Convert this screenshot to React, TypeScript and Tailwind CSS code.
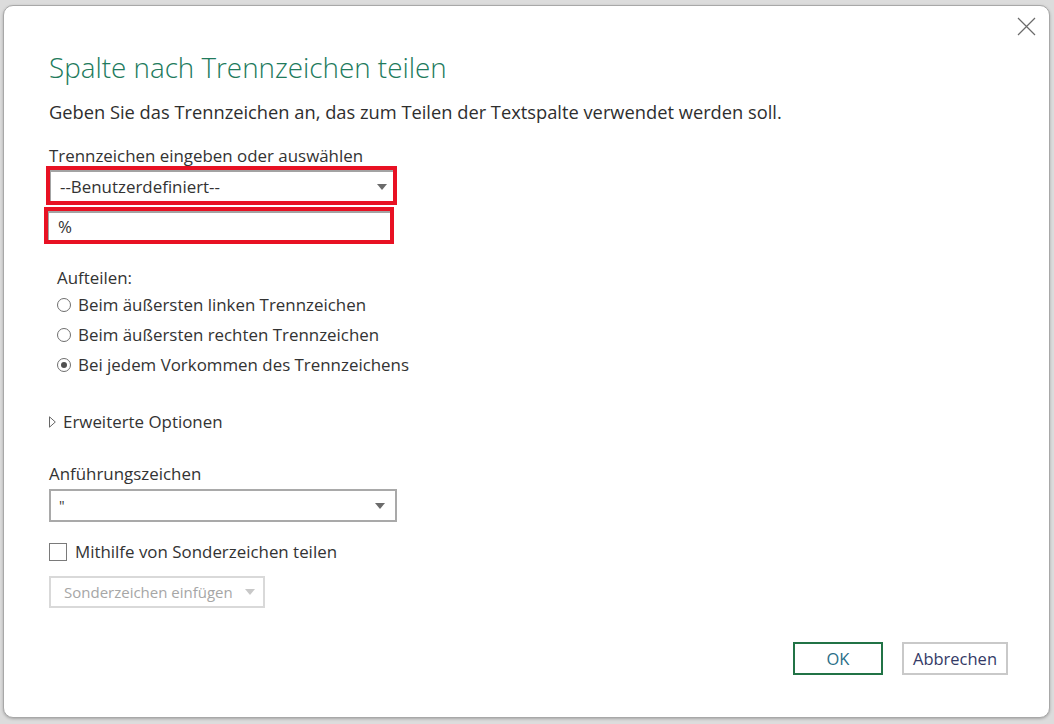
import React from "react";

const font = { fontFamily: '"Open Sans", "Noto Sans", sans-serif' };

const Caret = ({ color = "#6b6b6b" }: { color?: string }) => (
  <svg width="10" height="6" viewBox="0 0 10 6">
    <path d="M0 0 H10 L5 6 Z" fill={color} />
  </svg>
);

const Radio = ({ checked, label }: { checked?: boolean; label: string }) => (
  <div className="flex items-center gap-[7px] h-[30px]">
    <span className="w-[14px] h-[14px] rounded-full border border-[#6e6e6e] flex items-center justify-center bg-white">
      {checked && <span className="w-[6px] h-[6px] rounded-full bg-[#505050]" />}
    </span>
    <span>{label}</span>
  </div>
);

const App: React.FC = () => {
  return (
    <div
      className="w-[1054px] h-[724px] bg-[#dcdcdc] pt-[5px] pl-[3px] pr-[4px] pb-[6px] overflow-hidden"
      style={font}
    >
      <div className="h-full bg-white border border-[#a8a8a8] rounded-[10px] shadow-[0_1px_3px_rgba(0,0,0,0.25)] flex flex-col text-[#333333] text-[16.9px] leading-[22px]">
        {/* header */}
        <div className="flex justify-end pt-[11px] pr-[13px]">
          <svg width="19" height="19" viewBox="0 0 19 19">
            <path d="M1 1 L18 18 M18 1 L1 18" stroke="#6a6a6a" strokeWidth="1.2" fill="none" />
          </svg>
        </div>

        <div className="pl-[45px] flex flex-col flex-1">
          <h1 className="text-[27.8px] font-light text-[#217a5c] leading-[36px] mt-[13px]">
            Spalte nach Trennzeichen teilen
          </h1>
          <p className="text-[18.3px] leading-[24px] mt-[15px] text-[#2e2e2e]">
            Geben Sie das Trennzeichen an, das zum Teilen der Textspalte verwendet werden soll.
          </p>

          <label className="mt-[21px] leading-[22px]">Trennzeichen eingeben oder auswählen</label>

          <div className="mt-[-1px] -ml-[3px] w-[351px] border-[4px] border-[#e81123]">
            <div className="h-[31px] border-t-2 border-l border-[#a3a3a3] flex items-center justify-between pl-[9px] pr-[6px]">
              <span>--Benutzerdefiniert--</span>
              <Caret />
            </div>
          </div>

          <div className="mt-[2px] -ml-[5px] w-[350px] border-[4px] border-[#e81123]">
            <div className="h-[29px] border-t-2 border-l border-[#a3a3a3] flex items-center pl-[9px]">
              <span>%</span>
            </div>
          </div>

          <div className="pl-[8px] mt-[23px] flex flex-col">
            <span className="leading-[22px]">Aufteilen:</span>
            <div className="mt-[1px]">
              <Radio label="Beim äußersten linken Trennzeichen" />
              <Radio label="Beim äußersten rechten Trennzeichen" />
              <Radio checked label="Bei jedem Vorkommen des Trennzeichens" />
            </div>
          </div>

          <div className="flex items-center gap-[7px] mt-[30px] h-[24px]">
            <svg width="7" height="12" viewBox="0 0 7 12">
              <path d="M0.5 0.8 L6.3 6 L0.5 11.2 Z" stroke="#666" strokeWidth="1" fill="none" />
            </svg>
            <span>Erweiterte Optionen</span>
          </div>

          <label className="mt-[29px] leading-[22px]">Anführungszeichen</label>
          <div className="mt-[4px] w-[348px] h-[33px] border-2 border-[#a9a9a9] flex items-center justify-between pl-[8px] pr-[10px]">
            <span className="text-[14px]">"</span>
            <Caret />
          </div>

          <div className="flex items-center gap-[8px] mt-[19px] h-[22px]">
            <span className="w-[18px] h-[18px] border border-[#7a7a7a] bg-white" />
            <span>Mithilfe von Sonderzeichen teilen</span>
          </div>

          <div className="mt-[13px] w-[216px] h-[32px] border-2 border-[#d9d9d9] flex items-center pl-[13px] gap-[12px] text-[#a6a6a6] text-[15px]">
            <span>Sonderzeichen einfügen</span>
            <Caret color="#c8c8c8" />
          </div>

          <div className="flex justify-end gap-[19px] pr-[41px] mt-[34px]">
            <button className="w-[90px] h-[33px] border-2 border-[#217346] text-[#2a6f88] text-[16.5px]">
              OK
            </button>
            <button className="w-[106px] h-[33px] border-2 border-[#c9c9c9] text-[#333a66] text-[16.5px]">
              Abbrechen
            </button>
          </div>
        </div>
      </div>
    </div>
  );
};

export default App;
